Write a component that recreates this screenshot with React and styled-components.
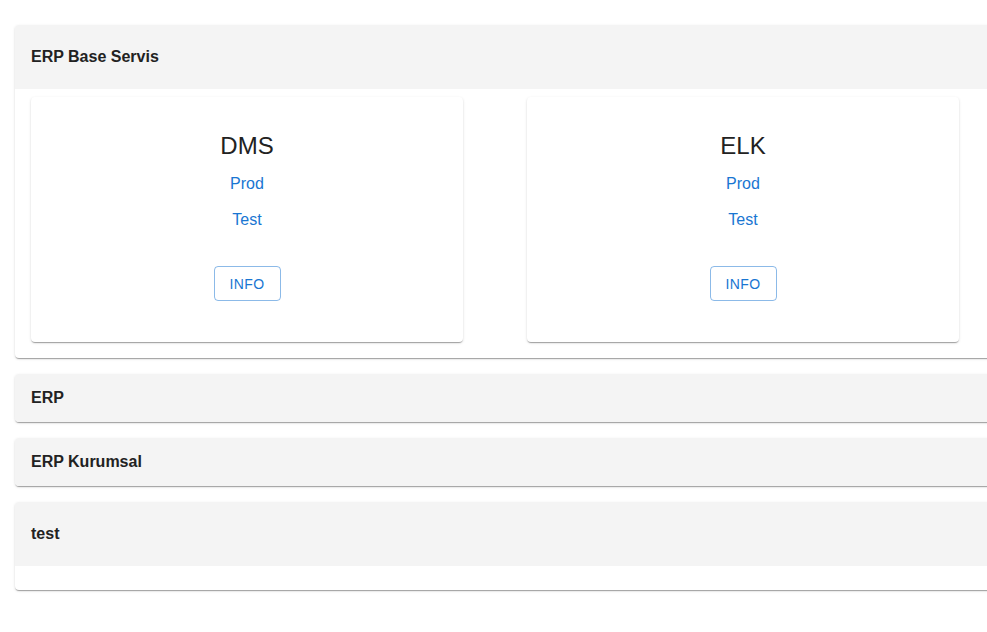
import React from "react";
import styled, { createGlobalStyle } from "styled-components";

const Global = createGlobalStyle`
  html { overflow: hidden; }
  body {
    margin: 0;
    background: #fff;
    font-family: "Liberation Sans", Arial, sans-serif;
    color: rgba(0,0,0,0.87);
  }
`;

const Page = styled.div`
  width: 1500px;
  padding: 25px 0 8px 15px;
  display: flex;
  flex-direction: column;
  gap: 16px;
`;

const Panel = styled.section`
  background: #fff;
  border-radius: 4px;
  box-shadow: 0 2px 1px -1px rgba(0,0,0,0.2), 0 1px 1px 0 rgba(0,0,0,0.14), 0 1px 3px 0 rgba(0,0,0,0.12);
  overflow: hidden;
`;

const Header = styled.div`
  background: #f4f4f4;
  height: ${(p) => (p.$expanded ? "64px" : "48px")};
  padding: 0 16px;
  display: flex;
  align-items: center;
  font-size: 16px;
  font-weight: 700;
  color: #222;
`;

const Details = styled.div`
  padding: 8px 16px 16px;
  display: flex;
  gap: 64px;
`;

const Card = styled.div`
  width: 432px;
  flex: none;
  height: 245px;
  background: #fff;
  border-radius: 4px;
  box-shadow: 0 2px 1px -1px rgba(0,0,0,0.2), 0 1px 1px 0 rgba(0,0,0,0.14), 0 1px 3px 0 rgba(0,0,0,0.12);
  box-sizing: border-box;
  padding-top: 33px;
  display: flex;
  flex-direction: column;
  align-items: center;
`;

const CardTitle = styled.div`
  font-size: 24px;
  line-height: 32px;
  height: 32px;
  margin-bottom: 4px;
  color: #222;
`;

const EnvLink = styled.a`
  display: block;
  font-size: 16px;
  line-height: 36px;
  height: 36px;
  color: #1976d2;
  text-decoration: none;
`;

const InfoButton = styled.button`
  margin-top: 28px;
  height: 35px;
  width: 67px;
  box-sizing: border-box;
  border: 1px solid rgba(25,118,210,0.5);
  border-radius: 4px;
  background: transparent;
  color: #1976d2;
  font-family: "Liberation Sans", Arial, sans-serif;
  font-size: 14px;
  letter-spacing: 0.4px;
  padding: 0;
  cursor: pointer;
`;

const groups = [
  { name: "ERP Base Servis", expanded: true, cards: ["DMS", "ELK"] },
  { name: "ERP", expanded: false },
  { name: "ERP Kurumsal", expanded: false },
  { name: "test", expanded: true, cards: [] },
];

export default function App() {
  return (
    <>
      <Global />
      <Page>
        {groups.map((g) => (
          <Panel key={g.name}>
            <Header $expanded={g.expanded}>{g.name}</Header>
            {g.expanded && (
              <Details>
                {g.cards.map((c) => (
                  <Card key={c}>
                    <CardTitle>{c}</CardTitle>
                    <EnvLink href="#">Prod</EnvLink>
                    <EnvLink href="#">Test</EnvLink>
                    <InfoButton>INFO</InfoButton>
                  </Card>
                ))}
              </Details>
            )}
          </Panel>
        ))}
      </Page>
    </>
  );
}
